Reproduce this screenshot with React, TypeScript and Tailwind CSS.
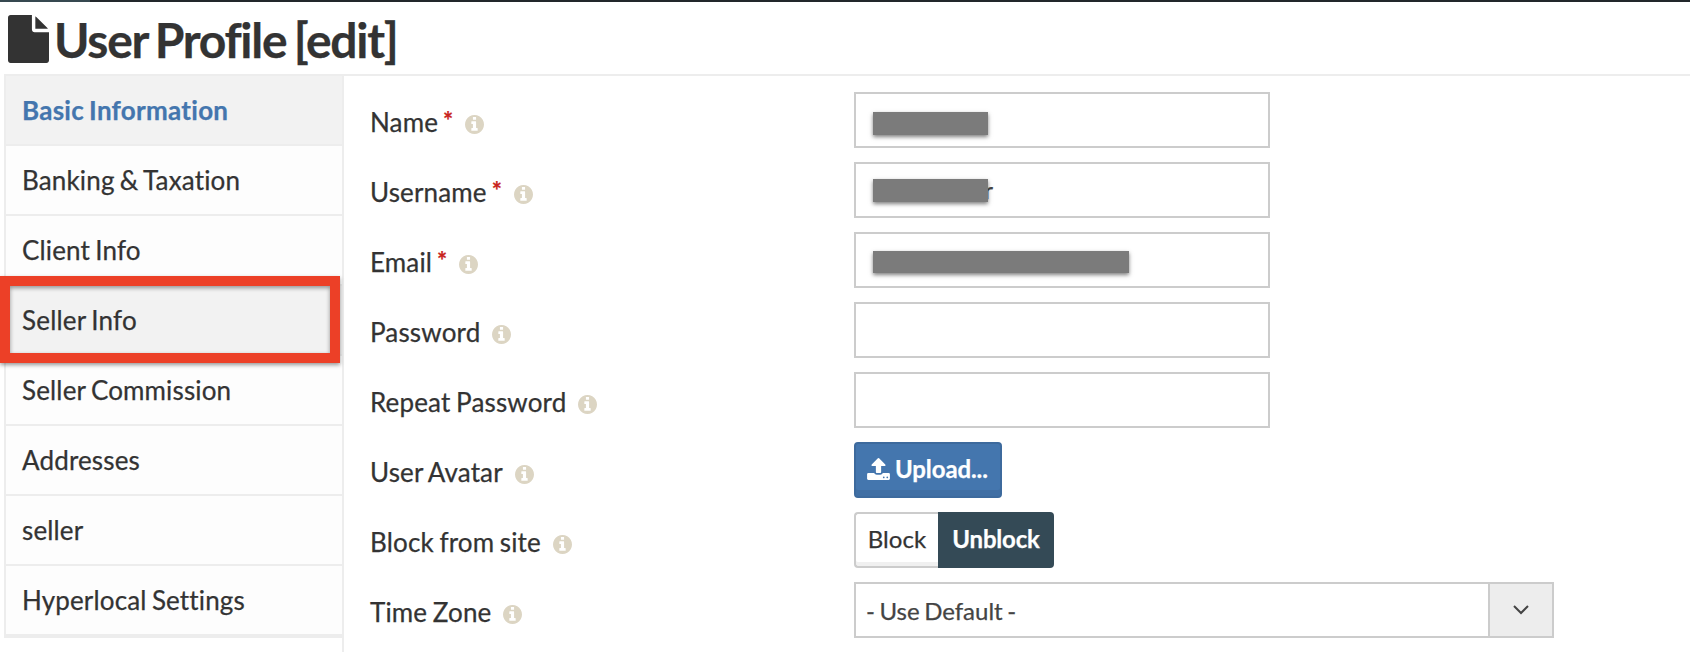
const tabs = [
  'Basic Information',
  'Banking & Taxation',
  'Client Info',
  'Seller Info',
  'Seller Commission',
  'Addresses',
  'seller',
  'Hyperlocal Settings',
];

function FileIcon() {
  return (
    <svg viewBox="128 0 1536 1792" className="h-12 w-[41px] shrink-0" fill="currentColor">
      <path d="M1152 512v-472q22 14 36 28l408 408q14 14 28 36h-472zm-128 32q0 40 28 68t68 28h544v1056q0 40-28 68t-68 28h-1344q-40 0-68-28t-28-68v-1600q0-40 28-68t68-28h800v544z" />
    </svg>
  );
}

function InfoIcon() {
  return (
    <svg viewBox="128 128 1536 1536" className="mt-[5px] h-[19px] w-[19px] shrink-0 text-[#dcd5c3]" fill="currentColor">
      <path d="M1152 1376v-160q0-14-9-23t-23-9h-96v-512q0-14-9-23t-23-9h-320q-14 0-23 9t-9 23v160q0 14 9 23t23 9h96v320h-96q-14 0-23 9t-9 23v160q0 14 9 23t23 9h448q14 0 23-9t9-23zm-128-896v-160q0-14-9-23t-23-9h-192q-14 0-23 9t-9 23v160q0 14 9 23t23 9h192q14 0 23-9t9-23zm640 416q0 209-103 385.5t-279.5 279.5-385.5 103-385.5-103-279.5-279.5-103-385.5 103-385.5 279.5-279.5 385.5-103 385.5 103 279.5 279.5 103 385.5z" />
    </svg>
  );
}

function UploadIcon() {
  return (
    <svg viewBox="64 60 1664 1604" className="h-[22px] w-[23px] shrink-0" fill="currentColor">
      <path d="M1344 1472q0-26-19-45t-45-19-45 19-19 45 19 45 45 19 45-19 19-45zm256 0q0-26-19-45t-45-19-45 19-19 45 19 45 45 19 45-19 19-45zm128-224v320q0 40-28 68t-68 28h-1472q-40 0-68-28t-28-68v-320q0-40 28-68t68-28h427q21 56 70.5 92t110.5 36h256q61 0 110.5-36t70.5-92h427q40 0 68 28t28 68zm-325-648q-17 40-59 40h-256v448q0 26-19 45t-45 19h-256q-26 0-45-19t-19-45v-448h-256q-42 0-59-40-17-39 14-69l448-448q18-19 45-19t45 19l448 448q31 30 14 69z" />
    </svg>
  );
}

function Row({ label, required, children }: { label: string; required?: boolean; children: React.ReactNode }) {
  return (
    <div className="flex h-14 items-start">
      <div className="flex w-[484px] shrink-0 items-center pt-[14px] text-[26px] leading-[32px] tracking-[0.15px] [word-spacing:-1.2px]">
        <span className="whitespace-nowrap">{label}</span>
        {required && <span className="-mt-[2px] ml-[5px] text-2xl font-bold text-[#c9231c]">*</span>}
        <span className="ml-3 flex">
          <InfoIcon />
        </span>
      </div>
      {children}
    </div>
  );
}

function Field({ children }: { children?: React.ReactNode }) {
  return <div className="h-14 w-[416px] border-2 border-[#cccccc] bg-white pl-[17px]">{children}</div>;
}

const mask = 'bg-[#7b7b7b] shadow-[0_2px_4px_rgba(0,0,0,0.5)]';

export default function App() {
  return (
    <div className="flex h-[652px] w-[1690px] flex-col overflow-hidden bg-white font-['Lato',sans-serif] text-[#333333] [font-variant-ligatures:none] [-webkit-text-stroke:0.25px_currentColor]">
      <div className="flex h-[2px] shrink-0 bg-[#22272b]">
        <div className="w-[90px] bg-[#364850]" />
      </div>
      <header className="flex h-[72px] shrink-0 items-start pt-[13px] pl-2">
        <FileIcon />
        <h1 className="ml-[5px] text-[48px] leading-[50px] font-bold tracking-[-1.25px] whitespace-nowrap [word-spacing:-3px]">User Profile [edit]</h1>
      </header>
      <div className="ml-1 flex grow border-t-2 border-[#ededed]">
        <nav className="w-[340px] shrink-0 border-r-2 border-[#ededed]">
          <div className="w-[338px] border-b-2 border-l-2 border-[#ededed] bg-[#fdfdfd]">
            {tabs.map((tab, i) => (
              <div
                key={tab}
                className={`relative flex h-[70px] items-center border-b-2 border-[#ededed] pl-4 text-[26px] leading-[32px] whitespace-nowrap [word-spacing:-1.5px] ${
                  i === 0
                    ? 'bg-[#f2f2f2] font-bold tracking-[0.27px] text-[#4476ae]'
                    : i === 3
                      ? 'bg-[#f2f2f2] tracking-[0.2px]'
                      : 'tracking-[0.15px]'
                }`}
              >
                {tab}
                {i === 3 && (
                  <div className="absolute -top-[10px] -left-[6px] h-[87px] w-[340px] border-[10px] border-[#ec4027] shadow-[0_2px_4px_rgba(0,0,0,0.4),inset_0_2px_4px_rgba(0,0,0,0.4)]" />
                )}
              </div>
            ))}
          </div>
        </nav>
        <main className="flex flex-col gap-[14px] pt-4 pl-[26px]">
          <Row label="Name" required>
            <Field>
              <div className={`mt-[18px] h-[23px] w-[115px] ${mask}`} />
            </Field>
          </Row>
          <Row label="Username" required>
            <Field>
              <div className="relative mt-[15px] h-[23px] w-[121px]">
                <span className="absolute right-[1px] bottom-0 text-2xl leading-[25px] text-[#444444]">r</span>
                <div className={`relative h-[23px] w-[115px] ${mask}`} />
              </div>
            </Field>
          </Row>
          <Row label="Email" required>
            <Field>
              <div className={`mt-[17px] h-[22px] w-[256px] ${mask}`} />
            </Field>
          </Row>
          <Row label="Password">
            <Field />
          </Row>
          <Row label="Repeat Password">
            <Field />
          </Row>
          <Row label="User Avatar">
            <button className="flex h-14 w-[148px] items-center rounded-[4px] border-2 border-[#3d6a9d] bg-[#4476ae] pb-[2px] pl-[11px] text-2xl font-bold text-white shadow-[inset_0_-6px_0_#406fa4]">
              <UploadIcon />
              <span className="ml-[5px] tracking-[-0.1px]">Upload...</span>
            </button>
          </Row>
          <Row label="Block from site">
            <div className="flex text-2xl">
              <button className="h-14 w-[84px] rounded-l-[4px] border-2 border-r-0 border-[#cccccc] pb-[2px] tracking-[0.1px] shadow-[inset_0_-4px_0_#f0f0f0]">Block</button>
              <button className="h-14 w-[116px] rounded-r-[4px] bg-[#344a56] pb-[2px] font-bold tracking-[-0.2px] text-white">Unblock</button>
            </div>
          </Row>
          <Row label="Time Zone">
            <div className="flex h-14 w-[700px] border-2 border-[#cccccc]">
              <div className="grow pt-[11px] pl-[10px] text-2xl leading-[32px] text-[#444444] [word-spacing:-1.6px]">- Use Default -</div>
              <div className="flex w-16 items-center justify-center border-l-2 border-[#cccccc] bg-[#ededed]">
                <svg viewBox="0 0 16 10" className="h-[10px] w-4" fill="none" stroke="#444444" strokeWidth="2">
                  <path d="M1 1l7 7 7-7" />
                </svg>
              </div>
            </div>
          </Row>
        </main>
      </div>
    </div>
  );
}
